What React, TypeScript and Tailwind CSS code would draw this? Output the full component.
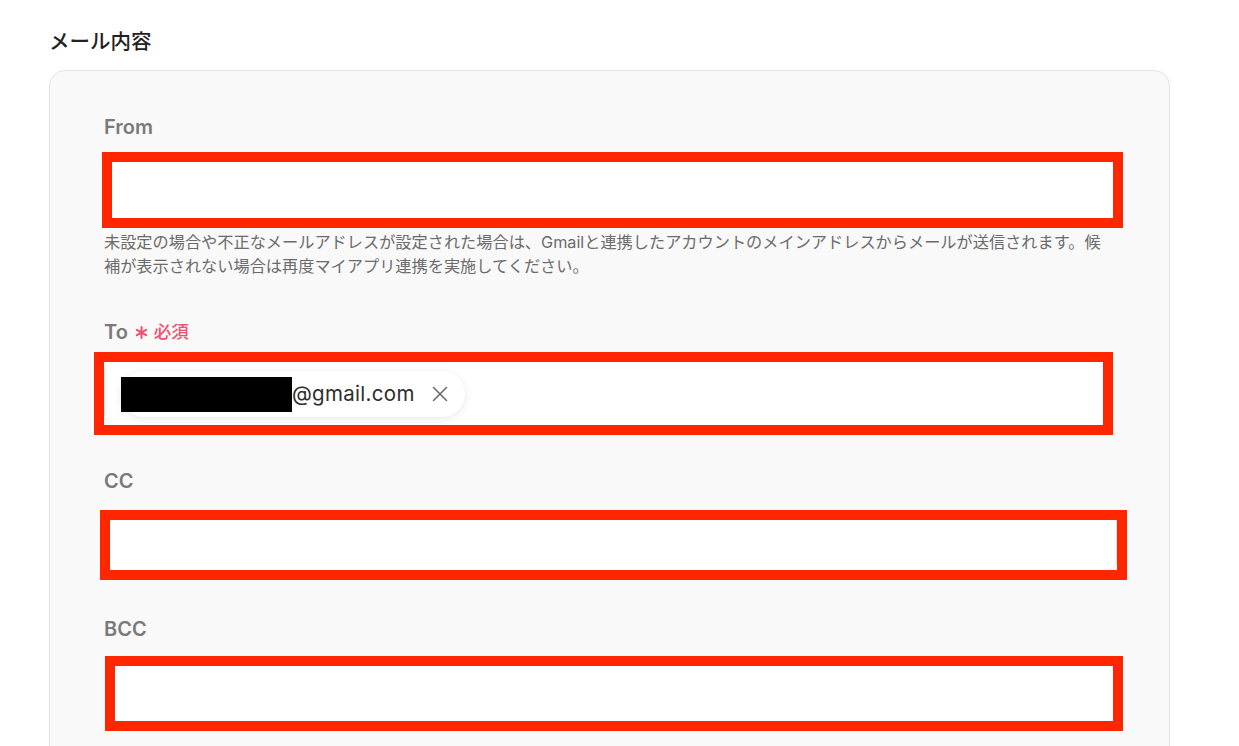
import { X } from "lucide-react";

const font = { fontFamily: 'Inter, "Noto Sans CJK JP", sans-serif' };

function Label({ children }: { children: React.ReactNode }) {
    return <div className="text-[20px] leading-[28px] font-semibold text-[#7a7a7a]">{children}</div>;
}

export default function App() {
    return (
        <div className="min-h-screen bg-white overflow-hidden" style={font}>
            <div className="pl-[49px] pr-[69px]">
                <h2 className="pt-[27px] h-[70px] text-[20.5px] leading-[30px] font-medium text-[#222]">メール内容</h2>

                <div className="w-[1121px] rounded-t-[16px] border border-[#e4e4e4] bg-[#f9f9f9] pl-[54px] pr-[55px] pt-[42px] pb-[60px]">
                    {/* From */}
                    <Label>From</Label>
                    <div className="mt-[11px] ml-[-2px] w-[1021px] h-[76px] border-[10px] border-[#ff2600] bg-white" />
                    <p className="mt-[2px] text-[16.2px] leading-[24px] text-[#6b6b6b] whitespace-nowrap">
                        未設定の場合や不正なメールアドレスが設定された場合は、Gmailと連携したアカウントのメインアドレスからメールが送信されます。候
                        <br />
                        補が表示されない場合は再度マイアプリ連携を実施してください。
                    </p>

                    {/* To */}
                    <div className="mt-[40px] flex items-center gap-[7px]">
                        <Label>To</Label>
                        <span className="flex items-center gap-[6px] text-[17.5px] leading-[28px] font-medium text-[#f0506e]">
                            <svg width="13" height="13" viewBox="0 0 14 14" className="mt-[1px]">
                                <g stroke="#f0506e" strokeWidth="2.2" strokeLinecap="round">
                                    <line x1="7" y1="1.2" x2="7" y2="12.8" />
                                    <line x1="2" y1="4.1" x2="12" y2="9.9" />
                                    <line x1="2" y1="9.9" x2="12" y2="4.1" />
                                </g>
                            </svg>
                            <span>必須</span>
                        </span>
                    </div>
                    <div className="mt-[6px] ml-[-10px] w-[1019px] h-[83px] border-[10px] border-[#ff2600] bg-white">
                        <div className="h-full border-l border-[#e6e6e6] rounded-l-[10px] pt-[9px] pl-[16px]">
                            <div className="inline-flex items-center h-[46px] rounded-full bg-white shadow-[0_2px_10px_rgba(0,0,0,0.09)] pr-[12px]">
                                <span className="w-[171px] h-[35px] bg-black" />
                                <span className="text-[20.5px] text-[#2d2d2d] tracking-[0.3px]">@gmail.com</span>
                                <X className="ml-[12px] w-[26px] h-[26px] text-[#6a6a6a]" strokeWidth={1.5} />
                            </div>
                        </div>
                    </div>

                    {/* CC */}
                    <div className="mt-[32px]">
                        <Label>CC</Label>
                    </div>
                    <div className="mt-[15px] ml-[-4px] w-[1027px] h-[70px] border-[10px] border-[#ff2600] bg-white">
                        <div className="h-full border-r border-[#e0e0e0] rounded-br-[10px]" />
                    </div>

                    {/* BCC */}
                    <div className="mt-[35px]">
                        <Label>BCC</Label>
                    </div>
                    <div className="mt-[13px] ml-[1px] w-[1018px] h-[75px] border-[10px] border-[#ff2600] bg-white" />
                </div>
            </div>
        </div>
    );
}
